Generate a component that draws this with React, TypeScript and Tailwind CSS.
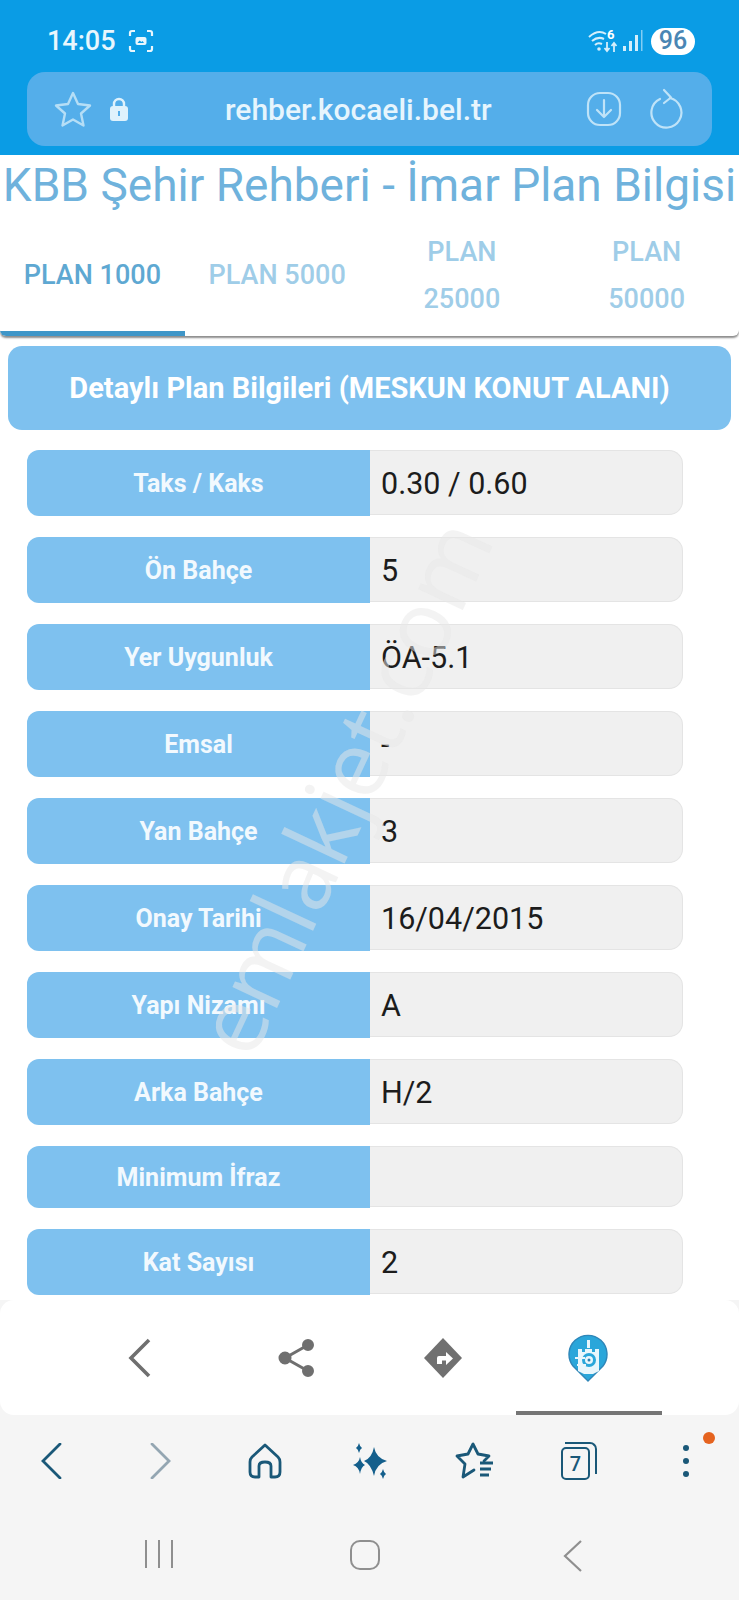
import React from "react";

const rows = [
  { label: "Taks / Kaks", value: "0.30 / 0.60" },
  { label: "Ön Bahçe", value: "5" },
  { label: "Yer Uygunluk", value: "ÖA-5.1" },
  { label: "Emsal", value: "-" },
  { label: "Yan Bahçe", value: "3" },
  { label: "Onay Tarihi", value: "16/04/2015" },
  { label: "Yapı Nizamı", value: "A" },
  { label: "Arka Bahçe", value: "H/2" },
  { label: "Minimum İfraz", value: "", short: true },
  { label: "Kat Sayısı", value: "2" },
];

const StatusBar = () => (
  <div className="flex h-[72px] items-center justify-between pl-[47px] pr-[44px] pt-[10px] text-white">
    <div className="flex items-center gap-[12px]">
      <span className="text-[27px] font-medium text-[#e8f6fd]">14:05</span>
      <svg width="26" height="24" viewBox="0 0 26 24" fill="none" stroke="#e8f6fd" strokeWidth="2.2">
        <path d="M2 7V4q0-2 2-2h3M19 2h3q2 0 2 2v3M24 17v3q0 2-2 2h-3M7 22H4q-2 0-2-2v-3" />
        <rect x="7.5" y="8" width="11" height="8" rx="2" fill="#e8f6fd" stroke="none" />
        <path d="M9.5 14l2-2.5 2 1.5 1-1 1.5 2z" fill="#0a9ce5" stroke="none" />
      </svg>
    </div>
    <div className="flex items-center">
      <svg width="32" height="28" viewBox="0 0 32 28" fill="none" stroke="#d4eefb" strokeWidth="2">
        <path d="M1 10q9-8 17-3M4 14q6-5 12-2M7 18q3-3 7-1" />
        <circle cx="11" cy="22" r="1.8" fill="#d4eefb" stroke="none" />
        <path d="M19 15v9m-2.500-3l2.500 3 2.500-3M26 25v-9m-2.500 3l2.500-3 2.500 3" strokeWidth="1.8" />
        <text x="19" y="12" fontSize="13" fontWeight="700" fill="#ffffff" stroke="none" fontFamily="Roboto, sans-serif">6</text>
      </svg>
      <svg width="22" height="26" viewBox="0 0 22 26" fill="#d4eefb" className="ml-[2px]">
        <rect x="1" y="18" width="3" height="5" />
        <rect x="7" y="13" width="3" height="10" />
        <rect x="13" y="7" width="3" height="16" />
        <rect x="19" y="2" width="1.500" height="21" opacity="0.6" />
      </svg>
      <div className="ml-[7px] flex h-[27px] w-[44px] items-center justify-center rounded-full bg-white text-[25px] font-medium text-[#4a86b4]">
        96
      </div>
    </div>
  </div>
);

const UrlBar = () => (
  <div className="mx-[27px] flex h-[74px] items-center rounded-[18px] bg-[#54aeea] pl-[27px] pr-[29px]">
    <svg width="38" height="38" viewBox="0 0 38 38" fill="none" stroke="#b5def6" strokeWidth="2.4" strokeLinejoin="round">
      <path d="M19 3l5 11 12 1.500-9 8 2.500 12L19 29.500 8.500 35.500 11 23.500l-9-8L14 14z" />
    </svg>
    <svg width="20" height="26" viewBox="0 0 20 26" className="ml-[17px]">
      <path d="M5 11V8a5 5 0 0 1 10 0v3" fill="none" stroke="#dff2fc" strokeWidth="2.400" />
      <rect x="1" y="10" width="18" height="15" rx="3" fill="#dff2fc" />
      <rect x="9" y="15" width="2" height="5" fill="#54aeea" />
    </svg>
    <span className="ml-[96px] text-[30px] font-medium text-[#e6f5fd]">rehber.kocaeli.bel.tr</span>
    <div className="ml-auto flex items-center gap-[27px]">
      <svg width="36" height="36" viewBox="0 0 36 36" fill="none" stroke="#bfe3f8" strokeWidth="2.200" strokeLinecap="round" strokeLinejoin="round">
        <rect x="2" y="2" width="32" height="32" rx="12" />
        <path d="M18 9v17m-7-7l7 7 7-7" />
      </svg>
      <svg width="34" height="42" viewBox="0 0 34 42" fill="none" stroke="#bfe3f8" strokeWidth="2.200" strokeLinecap="round" strokeLinejoin="round">
        <path d="M11 11a15 15 0 1 0 10-1" />
        <path d="M15 2l7 7.500-7 5.500" />
      </svg>
    </div>
  </div>
);

const Tabs = () => (
  <div className="grid h-[120px] grid-cols-4 overflow-hidden rounded-b-[6px] bg-white shadow-[0_2px_2px_rgba(0,0,0,0.45)]">
    <div className="flex items-center justify-center border-b-[5px] border-[#3f96c8] pt-[4px] text-[27px] font-medium text-[#5ea8d2]">
      PLAN 1000
    </div>
    <div className="flex items-center justify-center pb-[1px] text-[27px] font-medium text-[#9fcde8]">PLAN 5000</div>
    <div className="flex flex-col items-center justify-center pb-[1px] text-[27px] font-medium leading-[47px] text-[#9fcde8]">
      <span>PLAN</span>
      <span>25000</span>
    </div>
    <div className="flex flex-col items-center justify-center pb-[1px] text-[27px] font-medium leading-[47px] text-[#9fcde8]">
      <span>PLAN</span>
      <span>50000</span>
    </div>
  </div>
);

const BottomPanel = () => (
  <div className="relative flex h-[115px] items-center rounded-[14px] bg-white">
    <svg width="24" height="40" viewBox="0 0 24 40" fill="none" stroke="#6f6f6f" strokeWidth="3.600" className="ml-[127px]">
      <path d="M22 2L4 20l18 18" />
    </svg>
    <svg width="38" height="40" viewBox="0 0 38 40" fill="#6f6f6f" stroke="#6f6f6f" strokeWidth="3" className="ml-[127px]">
      <path d="M30 7L7 20l23 13" fill="none" />
      <circle cx="30" cy="7" r="4.500" />
      <circle cx="7" cy="20" r="5" />
      <circle cx="30" cy="33" r="4.500" />
    </svg>
    <svg width="40" height="40" viewBox="0 0 40 40" className="ml-[107px]">
      <path d="M20 0l19 20-19 20L1 20z" fill="#707070" />
      <path d="M14 26v-6q0-2 2-2h7v-4l7 6.500-7 6.500v-4.500h-4v3.500z" fill="#fff" />
    </svg>
    <svg width="40" height="48" viewBox="0 0 40 48" className="ml-[105px]">
      <path d="M20 47L5 32a19 19 0 1 1 30 0z" fill="#2aa6da" stroke="#2f86b8" strokeWidth="1.400" />
      <path d="M19 6h3v8h-3zM10 15h4v3h3v-3h7v3h3v-3h4v22l-6 3h-9l-6-3z" fill="#e8f6fc" />
      <circle cx="21" cy="26" r="7" fill="#2aa6da" />
      <circle cx="21" cy="26" r="4" fill="#e8f6fc" />
      <circle cx="21" cy="26" r="1.500" fill="#2a7fb0" />
      <path d="M7 23h10v2H7zM9 30h9v2H9z" fill="#e8f6fc" />
    </svg>
    <div className="absolute bottom-0 left-[516px] h-[4px] w-[146px] bg-[#757575]" />
  </div>
);

const BrowserNav = () => (
  <div className="relative flex h-[88px] items-start pt-[27px]">
    <div className="flex h-[38px] w-full items-center">
      <svg width="24" height="36" viewBox="0 0 24 36" fill="none" stroke="#1a5878" strokeWidth="2.800" strokeLinecap="round" className="ml-[40px]">
        <path d="M20 1L3 18l17 17" />
      </svg>
      <svg width="24" height="36" viewBox="0 0 24 36" fill="none" stroke="#94a6b2" strokeWidth="2.800" strokeLinecap="round" className="ml-[85px]">
        <path d="M3 1l17 17L3 35" />
      </svg>
      <svg width="34" height="36" viewBox="0 0 34 36" fill="none" stroke="#1a5878" strokeWidth="2.800" strokeLinejoin="round" className="ml-[75px]">
        <path d="M17 2L4 14q-2 2-2 5v10q0 5 5 5h4V23q0-4 6-4t6 4v11h4q5 0 5-5V19q0-3-2-5z" />
      </svg>
      <svg width="36" height="38" viewBox="0 0 36 38" fill="#145f8c" className="ml-[70px]">
        <path d="M22 5q2 11 13 14-11 3-13 15-3-12-10-15 8-3 10-14zM7 1q1 4 3 5-2 1-3 5-1-4-3-5 2-1 3-5zM31 27q1 4 3 5-2 1-3 5-1-4-3-5 2-1 3-5zM8 15q1 6 5 8-4 2-5 9-1-7-7-9 6-2 7-8z" />
      </svg>
      <svg width="40" height="38" viewBox="0 0 40 38" fill="none" stroke="#1a5878" strokeWidth="2.800" strokeLinejoin="round" strokeLinecap="round" className="ml-[67px]">
        <path d="M29 19l5-5-11-2L18 2l-5 10-11 2 8 8-2 13 11-7" />
        <path d="M25 21h13M25 27h11M25 33h9" strokeWidth="3" strokeLinecap="butt" />
      </svg>
      <div className="relative ml-[66px] h-[38px] w-[36px]">
        <div className="absolute left-0 top-[5px] flex h-[33px] w-[29px] items-center justify-center rounded-[5px] border-[2.500px] border-[#1a5878] text-[20px] font-medium text-[#1a5878]">
          7
        </div>
        <div className="absolute right-0 top-0 h-[32px] w-[32px] rounded-tr-[7px] border-r-[2.500px] border-t-[2.500px] border-[#1a5878]" />
      </div>
      <div className="ml-[86px] flex flex-col gap-[7px]">
        <span className="h-[6px] w-[6px] rounded-full bg-[#1a5878]" />
        <span className="h-[6px] w-[6px] rounded-full bg-[#1a5878]" />
        <span className="h-[6px] w-[6px] rounded-full bg-[#1a5878]" />
      </div>
    </div>
    <span className="absolute left-[703px] top-[17px] h-[12px] w-[12px] rounded-full bg-[#e5631f]" />
  </div>
);

const SystemNav = () => (
  <div className="flex h-[97px] items-start pt-[37px]">
    <div className="ml-[145px] flex gap-[11px]">
      <span className="h-[28px] w-[2px] bg-[#8f8f8f]" />
      <span className="h-[28px] w-[2px] bg-[#8f8f8f]" />
      <span className="h-[28px] w-[2px] bg-[#8f8f8f]" />
    </div>
    <div className="ml-[177px] h-[30px] w-[30px] rounded-[10px] border-[2.500px] border-[#8f8f8f]" />
    <svg width="20" height="32" viewBox="0 0 20 32" fill="none" stroke="#8f8f8f" strokeWidth="2.200" className="ml-[183px]">
      <path d="M18 1L2 16l16 15" />
    </svg>
  </div>
);

export default function App() {
  return (
    <div className="relative flex h-[1600px] w-[739px] flex-col overflow-hidden bg-white font-['Roboto',sans-serif]">
      <div className="h-[155px] shrink-0 bg-[#0a9ce5]">
        <StatusBar />
        <UrlBar />
      </div>
      <h1 className="h-[61px] shrink-0 whitespace-nowrap text-center text-[46px] font-normal leading-[60px] text-[#6fb2dc]">
        KBB Şehir Rehberi - İmar Plan Bilgisi
      </h1>
      <Tabs />
      <div className="mx-[8px] mt-[10px] flex h-[84px] shrink-0 items-center justify-center rounded-[14px] bg-[#7ec1ef] pt-[2px] text-[29px] font-bold text-white">
        Detaylı Plan Bilgileri (MESKUN KONUT ALANI)
      </div>
      <div className="mx-[27px] mt-[20px] flex w-[656px] flex-col gap-[21px]">
        {rows.map((row) => (
          <div key={row.label} className={row.short ? "flex h-[62px]" : "flex h-[66px]"}>
            <div className="flex w-[343px] items-center justify-center rounded-l-[12px] bg-[#7ec1ef] pt-[2px] text-[25px] font-bold text-[#f2f9fe]">
              {row.label}
            </div>
            <div className="flex h-[calc(100%-1px)] flex-1 items-center rounded-r-[14px] border border-l-0 border-[#e4e4e4] bg-[#f0f0f0] pl-[11px] pt-[2px] text-[30.5px] text-[#1c1c1c]">
              {row.value}
            </div>
          </div>
        ))}
      </div>
      <div className="mt-auto shrink-0 bg-[#f5f5f5]">
        <BottomPanel />
        <BrowserNav />
        <SystemNav />
      </div>
      <div className="pointer-events-none absolute left-[342px] top-[786px] -translate-x-1/2 -translate-y-1/2 -rotate-[65deg] whitespace-nowrap font-['Open_Sans',sans-serif] text-[92px] font-normal text-[#e8e8e8]/50">
        emlakjet.com
      </div>
    </div>
  );
}
